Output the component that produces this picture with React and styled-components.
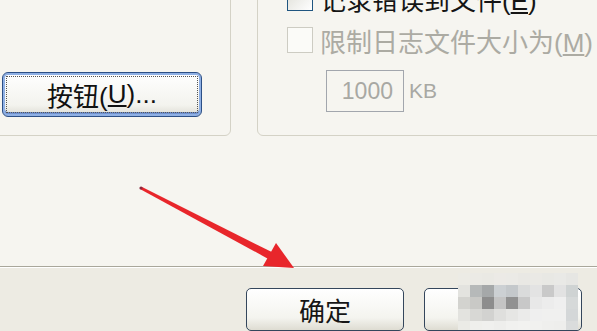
import React from 'react'
import styled, { createGlobalStyle } from 'styled-components'

const GlobalStyle = createGlobalStyle`
  html, body {
    margin: 0;
    padding: 0;
  }
  body {
    font-family: "Liberation Sans", "Noto Sans CJK SC", sans-serif;
  }
`

const Screen = styled.div`
  width: 597px;
  height: 331px;
  overflow: hidden;
  position: relative;
  display: flex;
  flex-direction: column;
  background: #f6f5f0;
  font-family: "Liberation Sans", "Noto Sans CJK SC", sans-serif;
`

const Content = styled.div`
  height: 266px;
  display: flex;
  align-items: flex-start;
  gap: 26px;
  background: #f6f5f0;
`

const GroupBox = styled.div`
  box-sizing: border-box;
  height: 166px;
  margin-top: -30px;
  border: 1px solid #d4d2c6;
  border-radius: 6px;
  flex-shrink: 0;
`

const LeftGroup = styled(GroupBox)`
  width: 241px;
  margin-left: -10px;
  padding: 101px 0 0 11px;
`

const RightGroup = styled(GroupBox)`
  width: 380px;
  padding: 14px 0 0 29px;
  display: flex;
  flex-direction: column;
`

const PushButton = styled.button`
  box-sizing: border-box;
  width: 200px;
  height: 45px;
  padding: 3px;
  border: 1px solid #2c4f86;
  border-radius: 6px;
  background: linear-gradient(#ffffff, #f3f3ee 75%, #dcdbd2);
  box-shadow: inset 0 0 0 2px #8fb0e4, inset 0 -2px 0 2px #6f91d0;
  font: inherit;
  font-size: 26px;
  color: #111;
  cursor: pointer;
`

const FocusRect = styled.span`
  display: flex;
  align-items: center;
  justify-content: center;
  height: 100%;
  box-sizing: border-box;
  border: 1px dotted #555;
`

const CheckRow = styled.label`
  display: flex;
  align-items: center;
  gap: 7px;
  height: 26px;
  margin-bottom: ${p => p.$gap || 0}px;
  font-size: 26px;
  white-space: nowrap;
  color: ${p => (p.$disabled ? '#acaba3' : '#151515')};
`

const Box = styled.span`
  box-sizing: border-box;
  width: 26px;
  height: 26px;
  flex-shrink: 0;
  border: 1px solid ${p => (p.$disabled ? '#cdccc3' : '#1f5580')};
  background: ${p => (p.$disabled ? '#fbfbf8' : 'linear-gradient(135deg, #dcdcd4, #ffffff)')};
`

const SizeRow = styled.div`
  display: flex;
  align-items: center;
  gap: 5px;
  margin-left: 39px;
`

const SizeInput = styled.div`
  box-sizing: border-box;
  width: 78px;
  height: 42px;
  border: 1px solid #a2a6ad;
  display: flex;
  align-items: center;
  justify-content: flex-end;
  padding-right: 10px;
  font-size: 23px;
  color: #a8a8a3;
`

const Unit = styled.span`
  font-size: 21px;
  color: #a8a8a3;
`

const Divider = styled.div`
  height: 1px;
  border-top: 1px solid #a9a79b;
  background: #ffffff;
`

const Footer = styled.div`
  flex: 1;
  position: relative;
  display: flex;
  justify-content: flex-end;
  align-items: flex-start;
  gap: 20px;
  padding: 20px 15px 0 0;
  background: #edebe3;
`

const DialogButton = styled.button`
  box-sizing: border-box;
  width: 158px;
  height: 43px;
  border: 1px solid #34465c;
  border-radius: 5px;
  background: linear-gradient(#ffffff, #f4f4ef 70%, #dedcd2);
  font: inherit;
  font-size: 26px;
  color: #161616;
`

const Mosaic = styled.div`
  position: absolute;
  left: 458px;
  top: 5px;
  display: grid;
  grid-template-columns: repeat(10, 12px);
  grid-template-rows: repeat(4, 12px) 9px;
`

const Cell = styled.div`
  background: ${p => p.$c};
`

const ArrowLayer = styled.svg`
  position: absolute;
  left: 0;
  top: 0;
  pointer-events: none;
`

const mosaic = [
  '#ecebe5', '#ebeae5', '#eae9e4', '#eceae6', '#ebeae6', '#e9e8e4', '#eae9e5', '#e8e8e4', '#e9e9e6', '#e6e6e3',
  '#e3e3df', '#b6b9b9', '#a5a8a9', '#ccd0d3', '#c4c8cb', '#dadbdb', '#e3e3e3', '#c9c9c9', '#e2e2e2', '#cfd3d3',
  '#d3d3cf', '#c9c9c6', '#8d8d8d', '#c4c4c4', '#919191', '#c8c8c8', '#e8e8e8', '#ececec', '#efefef', '#d6d9d9',
  '#e3e3df', '#d8d8d5', '#d2d2d0', '#dfdfdd', '#e6e6e4', '#ebebea', '#efefef', '#f0f0ef', '#f0f0ef', '#d4d7d8',
  '#ebebe6', '#efefec', '#f0f0ee', '#eeeeec', '#f1f1ef', '#f2f2f0', '#f1f1ef', '#efefed', '#eeeeec', '#dadcdc'
]

export default function App() {
  return (
    <>
      <GlobalStyle />
      <Screen>
        <Content>
          <LeftGroup>
            <PushButton>
              <FocusRect>按钮(<u>U</u>)...</FocusRect>
            </PushButton>
          </LeftGroup>
          <RightGroup>
            <CheckRow $gap={16}>
              <Box />
              <span>记录错误到文件(<u>E</u>)</span>
            </CheckRow>
            <CheckRow $gap={17} $disabled>
              <Box $disabled />
              <span>限制日志文件大小为(<u>M</u>)</span>
            </CheckRow>
            <SizeRow>
              <SizeInput>1000</SizeInput>
              <Unit>KB</Unit>
            </SizeRow>
          </RightGroup>
        </Content>
        <Divider />
        <Footer>
          <DialogButton>确定</DialogButton>
          <DialogButton>取消</DialogButton>
          <Mosaic>
            {mosaic.map((c, i) => (
              <Cell key={i} $c={c} />
            ))}
          </Mosaic>
        </Footer>
        <ArrowLayer width="597" height="331" viewBox="0 0 597 331">
          <polygon
            points="141.6,186.8 272.8,252.6 269.2,259.4 140.4,189.2"
            fill="#e8262b"
          />
          <polygon points="276,243 294,268 263,266" fill="#e8262b" />
          <circle cx="141" cy="188" r="1.6" fill="#8a2a40" />
        </ArrowLayer>
      </Screen>
    </>
  )
}
